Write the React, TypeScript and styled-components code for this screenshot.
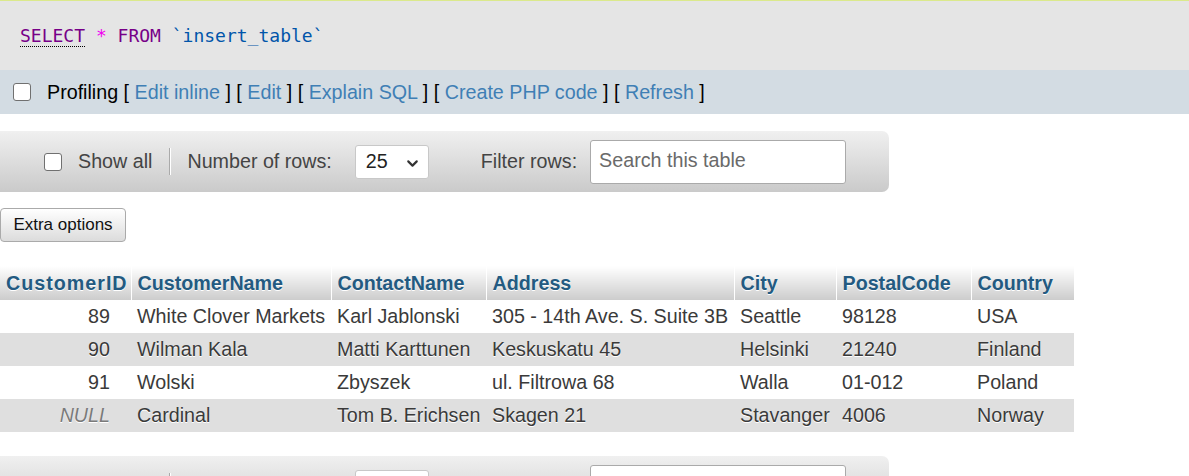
import React from 'react';
import styled, { createGlobalStyle } from 'styled-components';
import { ChevronDown } from 'lucide-react';

const GlobalStyle = createGlobalStyle`
  html, body {
    margin: 0;
    padding: 0;
    background: #fff;
    font-family: 'Liberation Sans', Arial, sans-serif;
    color: #444;
  }
`;

const SqlBox = styled.div`
  height: 69px;
  border-top: 1px solid #dbe98c;
  background: #e5e5e5;
  display: flex;
  align-items: center;
  padding-left: 20px;
  font-family: 'DejaVu Sans Mono', 'Liberation Mono', monospace;
  font-size: 18px;
`;

const SqlLine = styled.code`
  font-family: inherit;
  white-space: pre;
`;

const Token = styled.span<{ $tone: 'keyword' | 'operator' | 'ident' }>`
  color: ${(p) => (p.$tone === 'keyword' ? '#770088' : p.$tone === 'operator' ? '#f000f0' : '#0055aa')};
`;

const Keyword = styled(Token)`
  border-bottom: 1px dotted #000;
`;

const ProfilingBar = styled.div`
  height: 44px;
  background: #d3dce3;
  display: flex;
  align-items: center;
  padding-left: 13px;
  font-size: 19.7px;
  color: #000;
`;

const Check = styled.input.attrs({ type: 'checkbox' })`
  appearance: none;
  margin: 0;
  width: 18px;
  height: 18px;
  border: 1.5px solid #707070;
  border-radius: 3px;
  background: #fff;
  box-sizing: border-box;
  flex-shrink: 0;
`;

const ProfilingLabel = styled.span`
  margin-left: 16px;
  white-space: pre;
`;

const ActionLink = styled.a`
  color: #3f7fb5;
  text-decoration: none;
`;

const NavBar = styled.div<{ $top: number }>`
  margin-top: ${(p) => p.$top}px;
  width: 889px;
  height: 61px;
  box-sizing: border-box;
  border-radius: 0 7px 7px 0;
  background: linear-gradient(#f0f0f0, #cacaca);
  display: flex;
  align-items: center;
  padding-left: 44px;
  font-size: 19.7px;
  color: #444;
`;

const NavLabel = styled.span<{ $gap: number }>`
  margin-left: ${(p) => p.$gap}px;
  white-space: nowrap;
`;

const Separator = styled.span`
  width: 1px;
  height: 27px;
  margin: 0 17px 0 17px;
  background: #aaa;
  box-shadow: 1px 0 0 #fff;
  align-self: center;
`;

const SelectBox = styled.div`
  position: relative;
  margin-left: 23px;
  width: 74px;
  height: 34px;
  box-sizing: border-box;
  border: 1px solid #c8c8c8;
  border-radius: 3px;
  background: #fff;
  display: flex;
  align-items: center;
  padding-left: 10px;
  color: #222;
`;

const Chevron = styled(ChevronDown)`
  position: absolute;
  right: 7px;
  top: 9px;
`;

const SearchInput = styled.input`
  margin-left: 13px;
  width: 256px;
  height: 44px;
  box-sizing: border-box;
  border: 1px solid #aaa;
  border-radius: 3px;
  padding: 0 0 2px 8px;
  font-family: 'Liberation Sans', Arial, sans-serif;
  font-size: 19.7px;
  background: #fff;
  &::placeholder {
    color: #6a6a6a;
  }
`;

const ExtraButton = styled.button`
  display: block;
  margin-top: 16px;
  height: 34px;
  width: 126px;
  padding: 0;
  border: 1px solid #aaa;
  border-radius: 4px;
  background: linear-gradient(#fff, #dcdcdc);
  font-family: 'Liberation Sans', Arial, sans-serif;
  font-size: 17px;
  color: #111;
`;

const Table = styled.table`
  margin-top: 24px;
  border-collapse: collapse;
  table-layout: fixed;
  width: 1074px;
  font-size: 19.7px;
  text-shadow: 0 1px 0 #fff;
`;

const Head = styled.th<{ $wide?: boolean }>`
  height: 34px;
  padding: 0 0 0 6px;
  text-align: left;
  font-weight: bold;
  color: #235a81;
  background: linear-gradient(#fff, #cccccc);
  border-right: 1px solid #fff;
  white-space: nowrap;
  overflow: hidden;
  box-sizing: border-box;
  letter-spacing: ${(p) => (p.$wide ? '1px' : 'normal')};
`;

const Row = styled.tr<{ $shade: boolean }>`
  background: ${(p) => (p.$shade ? '#dfdfdf' : '#fff')};
`;

const Cell = styled.td<{ $num?: boolean; $null?: boolean }>`
  height: 33px;
  padding: ${(p) => (p.$num ? '0 21px 0 0' : '0 0 0 6px')};
  text-align: ${(p) => (p.$num ? 'right' : 'left')};
  color: ${(p) => (p.$null ? '#7a7a7a' : '#3a3a3a')};
  font-style: ${(p) => (p.$null ? 'italic' : 'normal')};
  white-space: nowrap;
  overflow: hidden;
`;

const columns = [
  { name: 'CustomerID', width: 131 },
  { name: 'CustomerName', width: 200 },
  { name: 'ContactName', width: 155 },
  { name: 'Address', width: 248 },
  { name: 'City', width: 102 },
  { name: 'PostalCode', width: 135 },
  { name: 'Country', width: 103 },
];

const rows = [
  ['89', 'White Clover Markets', 'Karl Jablonski', '305 - 14th Ave. S. Suite 3B', 'Seattle', '98128', 'USA'],
  ['90', 'Wilman Kala', 'Matti Karttunen', 'Keskuskatu 45', 'Helsinki', '21240', 'Finland'],
  ['91', 'Wolski', 'Zbyszek', 'ul. Filtrowa 68', 'Walla', '01-012', 'Poland'],
  [null, 'Cardinal', 'Tom B. Erichsen', 'Skagen 21', 'Stavanger', '4006', 'Norway'],
];

const links = ['Edit inline', 'Edit', 'Explain SQL', 'Create PHP code', 'Refresh'];

const Navigation = ({ top }: { top: number }) => (
  <NavBar $top={top}>
    <Check />
    <NavLabel $gap={16}>Show all</NavLabel>
    <Separator />
    <NavLabel $gap={0}>Number of rows:</NavLabel>
    <SelectBox>
      25
      <Chevron size={17} strokeWidth={3} color="#333" />
    </SelectBox>
    <NavLabel $gap={52}>Filter rows:</NavLabel>
    <SearchInput placeholder="Search this table" />
  </NavBar>
);

export default function App() {
  return (
    <>
      <GlobalStyle />
      <SqlBox>
        <SqlLine>
          <Keyword $tone="keyword">SELECT</Keyword> <Token $tone="operator">*</Token>{' '}
          <Token $tone="keyword">FROM</Token> <Token $tone="ident">`insert_table`</Token>
        </SqlLine>
      </SqlBox>
      <ProfilingBar>
        <Check />
        <ProfilingLabel>
          Profiling
          {links.map((l) => (
            <React.Fragment key={l}>
              {' [ '}
              <ActionLink href="#">{l}</ActionLink>
              {' ]'}
            </React.Fragment>
          ))}
        </ProfilingLabel>
      </ProfilingBar>
      <Navigation top={17} />
      <ExtraButton>Extra options</ExtraButton>
      <Table>
        <colgroup>
          {columns.map((c) => (
            <col key={c.name} style={{ width: c.width }} />
          ))}
        </colgroup>
        <thead>
          <tr>
            {columns.map((c, i) => (
              <Head key={c.name} $wide={i === 0}>
                {c.name}
              </Head>
            ))}
          </tr>
        </thead>
        <tbody>
          {rows.map((r, i) => (
            <Row key={i} $shade={i % 2 === 1}>
              {r.map((v, j) =>
                j === 0 ? (
                  <Cell key={j} $num $null={v === null}>
                    {v ?? 'NULL'}
                  </Cell>
                ) : (
                  <Cell key={j}>{v}</Cell>
                ),
              )}
            </Row>
          ))}
        </tbody>
      </Table>
      <Navigation top={24} />
    </>
  );
}
